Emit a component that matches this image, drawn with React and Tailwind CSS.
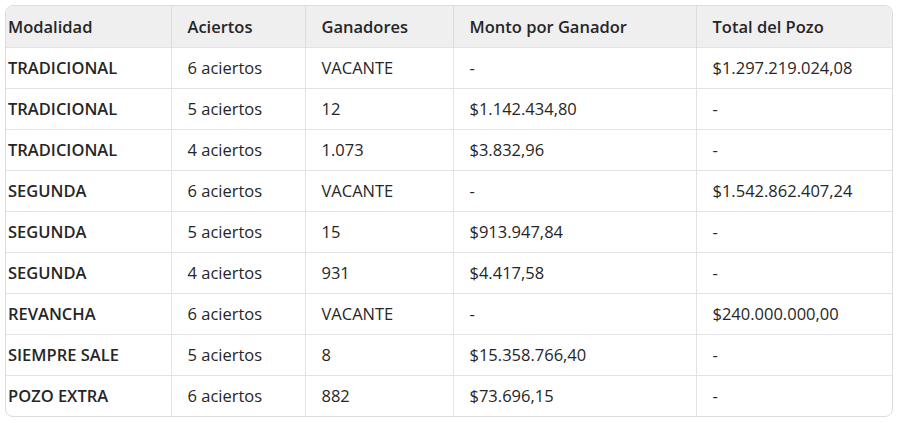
import React from "react";

const rows = [
  ["TRADICIONAL", "6 aciertos", "VACANTE", "-", "$1.297.219.024,08"],
  ["TRADICIONAL", "5 aciertos", "12", "$1.142.434,80", "-"],
  ["TRADICIONAL", "4 aciertos", "1.073", "$3.832,96", "-"],
  ["SEGUNDA", "6 aciertos", "VACANTE", "-", "$1.542.862.407,24"],
  ["SEGUNDA", "5 aciertos", "15", "$913.947,84", "-"],
  ["SEGUNDA", "4 aciertos", "931", "$4.417,58", "-"],
  ["REVANCHA", "6 aciertos", "VACANTE", "-", "$240.000.000,00"],
  ["SIEMPRE SALE", "5 aciertos", "8", "$15.358.766,40", "-"],
  ["POZO EXTRA", "6 aciertos", "882", "$73.696,15", "-"],
];

const headers = ["Modalidad", "Aciertos", "Ganadores", "Monto por Ganador", "Total del Pozo"];
const widths = ["w-[165px]", "w-[134px]", "w-[148px]", "w-[243px]", "w-[196px]"];

export default function App() {
  return (
    <div className="w-[900px] h-[423px] bg-white pl-[5px] pt-[5px]" style={{ fontFamily: '"Open Sans", "Noto Sans", sans-serif' }}>
      <div className="w-[888px] border border-[#dcdcdc] rounded-[8px] overflow-hidden">
        <table className="border-collapse table-fixed w-full text-[16.5px] text-[#262626]">
          <thead>
            <tr className="bg-[#efefef] h-[41px]">
              {headers.map((h, i) => (
                <th
                  key={h}
                  className={`${widths[i]} text-left font-semibold pt-[2px] ${i === 0 ? "pl-[2px]" : "pl-[16px] border-l border-[#dcdcdc]"}`}
                >
                  {h}
                </th>
              ))}
            </tr>
          </thead>
          <tbody>
            {rows.map((r, ri) => (
              <tr key={ri} className="h-[41px] border-t border-[#e3e3e3]">
                {r.map((c, ci) => (
                  <td
                    key={ci}
                    className={`pt-[2px] ${ci === 0 ? "pl-[2px] font-semibold" : "pl-[16px] border-l border-[#e3e3e3]"}`}
                  >
                    {c}
                  </td>
                ))}
              </tr>
            ))}
          </tbody>
        </table>
      </div>
    </div>
  );
}
